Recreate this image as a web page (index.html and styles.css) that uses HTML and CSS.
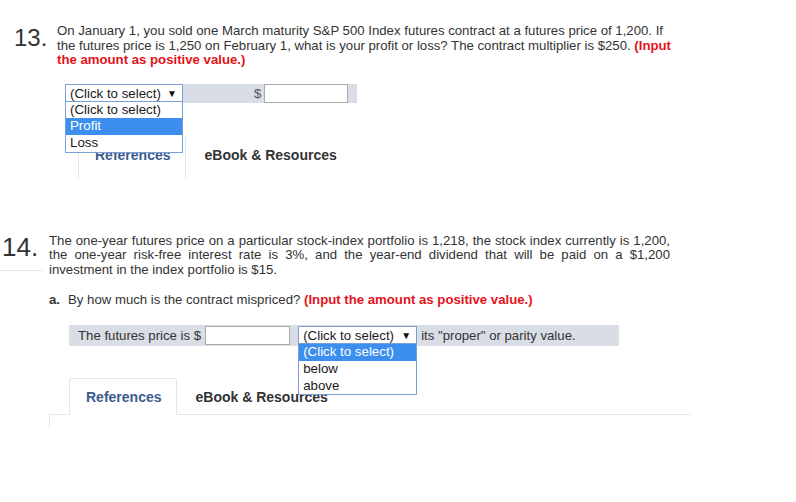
FILE: index.html
```html
<!DOCTYPE html>
<html>
<head>
<meta charset="utf-8">
<link rel="stylesheet" href="styles.css">
</head>
<body>
<section class="q q13">
  <div class="qnum">13.</div>
  <div class="qbody">
    <p class="stem">On January 1, you sold one March maturity S&amp;P 500 Index futures contract at a futures price of 1,200. If the futures price is 1,250 on February 1, what is your profit or loss? The contract multiplier is $250. <b class="red">(Input the amount as positive value.)</b></p>
    <div class="bar bar13">
      <div class="sel">
        <span class="sel-text">(Click to select)</span><span class="arrow">&#9660;</span>
        <ul class="menu">
          <li>(Click to select)</li>
          <li class="hl">Profit</li>
          <li>Loss</li>
        </ul>
      </div>
      <span class="dollar">$</span>
      <span class="inp"></span>
    </div>
    <div class="tabs tabs13">
      <div class="tab active">References</div>
      <div class="tab">eBook &amp; Resources</div>
    </div>
  </div>
</section>

<section class="q q14">
  <div class="qnum">14.</div>
  <div class="qbody">
    <p class="stem">The one-year futures price on a particular stock-index portfolio is 1,218, the stock index currently is 1,200, the one-year risk-free interest rate is 3%, and the year-end dividend that will be paid on a $1,200 investment in the index portfolio is $15.</p>
    <p class="parta"><b class="lbl">a.</b>By how much is the contract mispriced? <b class="red">(Input the amount as positive value.)</b></p>
    <div class="bar bar14">
      <span>The futures price is $</span>
      <span class="inp"></span>
      <div class="sel">
        <span class="sel-text">(Click to select)</span><span class="arrow">&#9660;</span>
        <ul class="menu">
          <li class="hl">(Click to select)</li>
          <li>below</li>
          <li>above</li>
        </ul>
      </div>
      <span class="after">its "proper" or parity value.</span>
    </div>
    <div class="tabs tabs14">
      <div class="tab active">References</div>
      <div class="tab">eBook &amp; Resources</div>
    </div>
    <div class="panel"></div>
  </div>
</section>
</body>
</html>
```

FILE: styles.css
```css
body {
  margin: 0;
  background: #fff;
  color: #333;
  font-family: "Liberation Sans", Arial, sans-serif;
}

.q {
  display: flex;
  align-items: flex-start;
}

.q13 {
  padding-top: 24px;
}

.qnum {
  color: #333;
}

.q13 .qnum {
  width: 43px;
  padding-left: 14px;
  margin-top: 2px;
  font-size: 24px;
  line-height: 24px;
}

.stem {
  margin: 0;
  font-size: 13.2px;
  line-height: 14.6px;
}

.q13 .stem {
  width: 614px;
}

.red {
  color: #e3131b;
}

.bar {
  display: flex;
  align-items: center;
  background: #d9dde6;
  font-size: 13.2px;
  box-sizing: border-box;
}

.bar13 {
  margin: 16px 0 0 8px;
  width: 292px;
  height: 19px;
}

.sel {
  position: relative;
  box-sizing: border-box;
  width: 118px;
  height: 19px;
  border: 1px solid #7a9fd6;
  background: #fff;
  display: flex;
  align-items: center;
  padding-left: 4px;
  padding-right: 5px;
  color: #1a1a1a;
  font-size: 13.3px;
}

.arrow {
  margin-left: auto;
  font-size: 10px;
  color: #111;
}

.menu {
  position: absolute;
  top: calc(100% - 1px);
  left: -1px;
  width: 118px;
  box-sizing: border-box;
  margin: 0;
  padding: 0;
  list-style: none;
  border: 1px solid #7a9fd6;
  background: #fff;
  z-index: 5;
}

.menu li {
  height: 16.7px;
  line-height: 16.7px;
  padding-left: 4px;
  color: #1a1a1a;
}

.menu li.hl {
  background: #3c8fee;
  color: #fff;
}

.dollar {
  margin-left: 71px;
  color: #555;
}

.inp {
  display: block;
  box-sizing: border-box;
  width: 84px;
  height: 19px;
  margin-left: 3px;
  border: 1px solid #aaa;
  background: #fff;
}

.tabs {
  display: flex;
  align-items: flex-start;
}

.tab {
  font-size: 14px;
  font-weight: bold;
  line-height: 16px;
  padding: 10px 14px 10px 16px;
  border: 1px solid transparent;
  border-bottom: 0;
  color: #333;
}

.tab + .tab {
  padding-left: 18px;
}

.tab.active {
  position: relative;
  z-index: 1;
  background: #fff;
  color: #3d5b8d;
  border-color: #e6e6e6;
  border-radius: 3px 3px 0 0;
}

.tabs13 {
  margin-top: 33px;
  padding-left: 21px;
}

.tabs13 .tab {
  padding-bottom: 15px;
}

.q14 {
  margin-top: 56px;
}

.q14 .qnum {
  box-sizing: border-box;
  width: 43px;
  height: 37px;
  margin-right: 6px;
  padding-left: 2px;
  font-size: 26px;
  line-height: 26px;
  border-bottom: 1px solid #e8e8e8;
}

.q14 .stem {
  width: 621px;
  text-align: justify;
}

.parta {
  margin: 15px 0 0;
  font-size: 13.2px;
  line-height: 14.6px;
}

.lbl {
  display: inline-block;
  width: 19px;
}

.bar14 {
  margin: 18px 0 0 20px;
  width: 550px;
  height: 21px;
  padding-left: 9px;
  color: #333;
}

.bar14 .inp {
  width: 85px;
  margin-left: 4px;
}

.bar14 .sel {
  width: 119px;
  margin-left: 8px;
}

.bar14 .menu {
  width: 119px;
}

.after {
  margin-left: 4px;
}

.tabs14 {
  margin-top: 32px;
  padding-left: 20px;
}

.panel {
  width: 641px;
  height: 13px;
  margin-top: -1px;
  border-top: 1px solid #e8e8e8;
  border-left: 1px solid #e8e8e8;
}
```
